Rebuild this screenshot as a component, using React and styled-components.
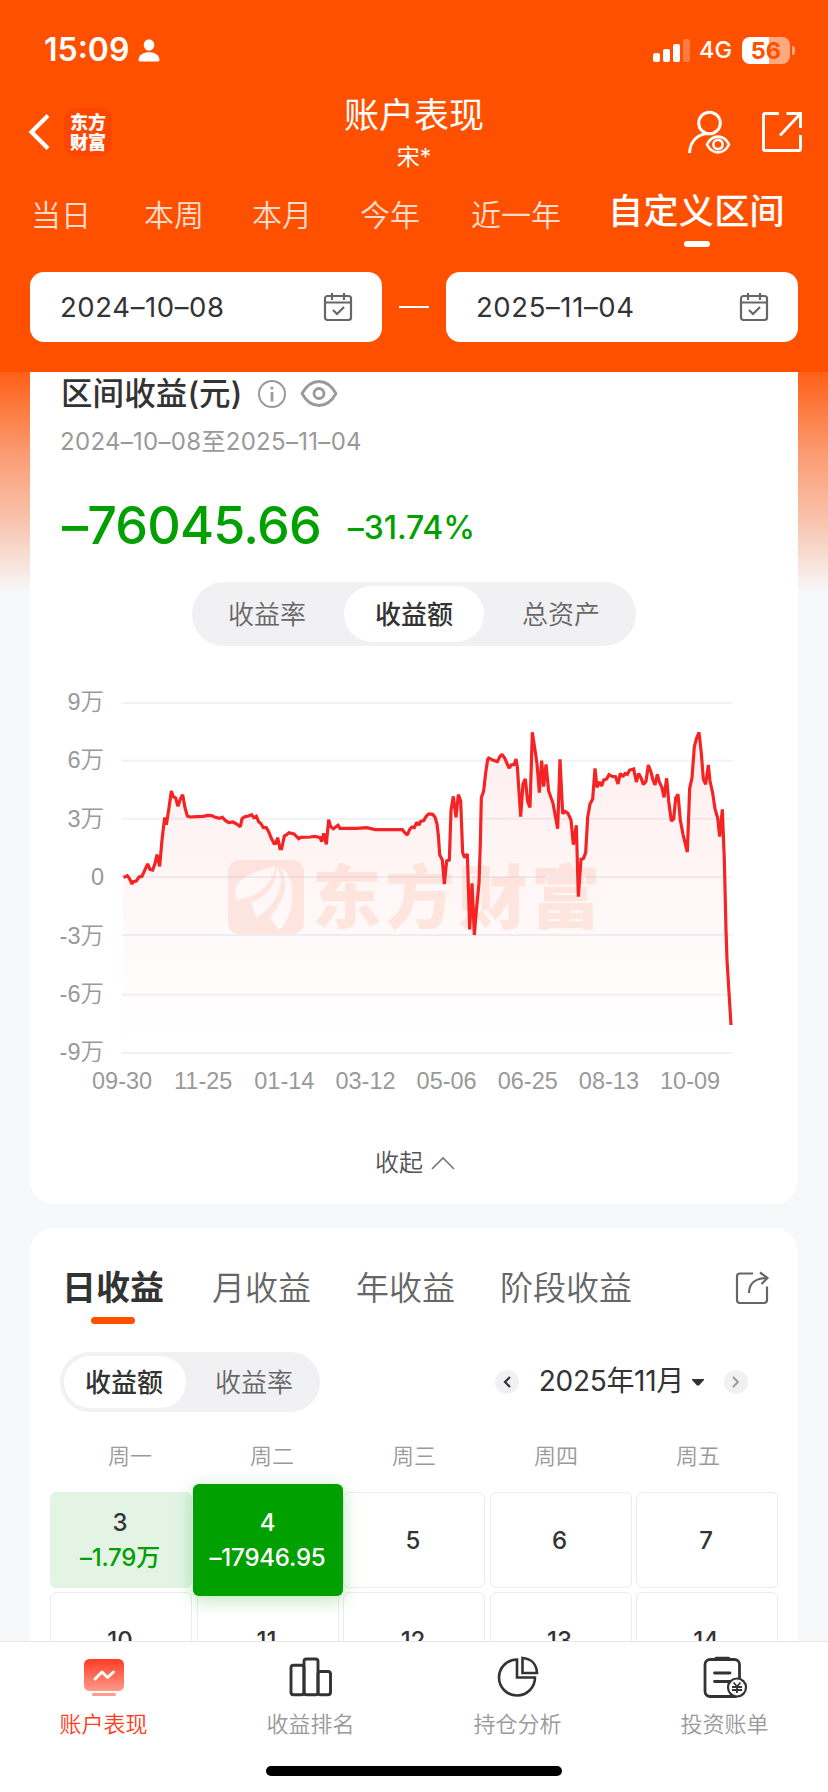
import React from "react";
import styled, { createGlobalStyle, css } from "styled-components";

const GlobalStyle = createGlobalStyle`
  * {
    box-sizing: border-box;
  }
  body {
    margin: 0;
    font-family: Inter, "Noto Sans CJK SC", sans-serif;
    color: #333;
  }
`;

const Page = styled.div`
  width: 828px;
  height: 1792px;
  display: flex;
  flex-direction: column;
  overflow: hidden;
  background: #f7f8fa;
`;

/* ---------- header ---------- */

const Header = styled.header`
  height: 372px;
  flex: none;
  display: flex;
  flex-direction: column;
  background: #ff5000;
  color: #fff;
`;

const StatusBar = styled.div`
  height: 84px;
  padding: 16px 33px 0 44px;
  display: flex;
  align-items: center;
`;

const Clock = styled.span`
  font-size: 32px;
  font-weight: 600;
  line-height: 40px;
  margin-right: 9px;
`;

const Network = styled.span`
  font-size: 23.5px;
  font-weight: 500;
  line-height: 32px;
  margin: 0 10px 0 9px;
`;

const Signal = styled.svg`
  margin-left: auto;
`;

const Battery = styled.div`
  width: 48px;
  height: 27px;
  border-radius: 8px;
  background: linear-gradient(90deg, #fff 56%, #ffa980 56%);
  color: #ff5000;
  font-size: 23.5px;
  font-weight: 700;
  line-height: 28px;
  text-align: center;
`;

const BatteryTip = styled.div`
  width: 3px;
  height: 9px;
  margin-left: 2px;
  border-radius: 0 4px 4px 0;
  background: #ffa980;
`;

const TitleBar = styled.div`
  height: 96px;
  padding: 0 25px;
  display: grid;
  grid-template-columns: 1fr auto 1fr;
  align-items: center;
`;

const TitleLeft = styled.div`
  padding-left: 3px;
  display: flex;
  align-items: center;
  gap: 14px;
`;

const TitleRight = styled.div`
  display: flex;
  align-items: center;
  justify-content: flex-end;
  gap: 30px;
`;

const Brand = styled.div`
  width: 48px;
  height: 48px;
  padding-top: 3px;
  border-radius: 10px;
  background: #ff4600;
  font-family: "Noto Sans CJK SC", sans-serif;
  font-size: 18px;
  font-weight: 900;
  line-height: 20px;
  text-align: center;
  span {
    display: block;
  }
`;

const TitleText = styled.div`
  padding-top: 3px;
  text-align: center;
  h1 {
    margin: 0;
    font-size: 35px;
    font-weight: 400;
    line-height: 44px;
  }
  p {
    margin: 3px 0 0 0;
    font-size: 23px;
    line-height: 34px;
  }
`;

const RangeTabs = styled.nav`
  height: 92px;
  padding: 5px 0 0 31px;
  display: flex;
`;

const RangeTab = styled.span`
  margin-right: ${(p) => p.$after || 48}px;
  font-size: 30px;
  font-weight: 350;
  line-height: 60px;
  color: #ffdccc;
  ${(p) =>
    p.$active &&
    css`
      display: flex;
      flex-direction: column;
      align-items: center;
      margin: 0 0 0 -1px;
      font-size: 35px;
      font-weight: 500;
      letter-spacing: 0.4px;
      line-height: 52px;
      color: #fff;
      &::after {
        content: "";
        width: 26px;
        height: 6px;
        margin-top: 4px;
        border-radius: 3px;
        background: #fff;
      }
    `}
`;

const DateRow = styled.div`
  padding: 0 30px;
  display: flex;
  align-items: center;
  justify-content: space-between;
`;

const DateBox = styled.div`
  width: 352px;
  height: 70px;
  padding: 0 29px 0 30px;
  border-radius: 14px;
  background: #fff;
  color: #333;
  display: flex;
  align-items: center;
  justify-content: space-between;
  font-size: 27.5px;
  font-weight: 380;
  letter-spacing: 0.6px;
`;

const DateDash = styled.i`
  width: 30px;
  height: 2px;
  background: #fff;
`;

/* ---------- content ---------- */

const Content = styled.main`
  flex: 1;
  min-height: 0;
  overflow: hidden;
  padding: 0 30px;
  display: flex;
  flex-direction: column;
  gap: 24px;
  background: linear-gradient(180deg, #ff5f17 0, #fb9a70 80px, #f8c4ae 150px, #f7f8fa 220px);
`;

const Card = styled.section`
  flex: none;
  background: #fff;
  border-radius: ${(p) => (p.$cut ? "0 0 24px 24px" : "24px")};
  height: ${(p) => p.$height}px;
  display: flex;
  flex-direction: column;
`;

const SummaryHead = styled.div`
  height: 43px;
  flex: none;
  padding-left: 31px;
  display: flex;
  align-items: center;
  h2 {
    margin: 0 15px 0 0;
    font-size: 31.5px;
    font-weight: 500;
    letter-spacing: 0.1px;
    line-height: 43px;
  }
  svg {
    margin: 1px 13px 0 0;
  }
`;

const Period = styled.div`
  height: 52px;
  flex: none;
  padding-left: 30px;
  font-size: 24px;
  font-weight: 370;
  line-height: 54px;
  letter-spacing: 0.3px;
  color: #999;
`;

const Amounts = styled.div`
  height: 115px;
  flex: none;
  padding: 27px 0 0 32px;
  display: flex;
  align-items: flex-start;
  gap: 27px;
  color: #00a000;
  font-weight: 500;
`;

const Profit = styled.span`
  font-size: 52px;
  line-height: 64px;
  letter-spacing: -0.8px;
`;

const Percent = styled.span`
  padding-top: 2px;
  font-size: 32px;
  line-height: 64px;
  letter-spacing: -0.1px;
`;

const Segment = styled.div`
  width: ${(p) => p.$width}px;
  height: ${(p) => p.$height}px;
  padding: 4px;
  border-radius: 32px;
  background: #f1f1f4;
  display: flex;
`;

const SegmentItem = styled.span`
  flex: none;
  width: ${(p) => p.$width}px;
  padding: ${(p) => p.$pad || "0 0 3px"};
  border-radius: 28px;
  display: flex;
  align-items: center;
  justify-content: center;
  font-size: 26px;
  font-weight: ${(p) => (p.$active ? 500 : 350)};
  color: ${(p) => (p.$active ? "#333" : "#666")};
  background: ${(p) => (p.$active ? "#fff" : "none")};
`;

const SegmentHolder = styled.div`
  flex: none;
  display: flex;
  justify-content: center;
`;

const ChartRow = styled.div`
  margin-top: 34px;
  height: 380px;
  flex: none;
  display: flex;
`;

const AxisY = styled.div`
  width: 80px;
  flex: none;
  padding: 6px 6px 0 0;
  display: flex;
  flex-direction: column;
  text-align: right;
  color: #999;
  font-family: "Liberation Sans", "Noto Sans CJK SC", sans-serif;
  font-size: 23.5px;
  font-weight: 350;
  line-height: 32px;
  span {
    flex: none;
    height: 58.4px;
  }
`;

const AxisX = styled.div`
  height: 36px;
  flex: none;
  margin-top: 3px;
  padding-left: 51.5px;
  display: flex;
  color: #999;
  font-family: "Liberation Sans", sans-serif;
  font-size: 23.5px;
  line-height: 36px;
  span {
    width: 81.15px;
    text-align: center;
  }
`;

const Collapse = styled.div`
  margin-top: 47px;
  padding-left: 2px;
  display: flex;
  align-items: center;
  justify-content: center;
  gap: 8px;
  color: #555;
  font-size: 24px;
  font-weight: 350;
  line-height: 34px;
`;

/* ---------- calendar ---------- */

const ProfitTabs = styled.div`
  height: 124px;
  flex: none;
  padding: 36px 29px 0 32px;
  display: flex;
`;

const ProfitTab = styled.span`
  margin-right: 45px;
  font-size: 33px;
  font-weight: 350;
  line-height: 48px;
  color: #666;
  ${(p) =>
    p.$active &&
    css`
      display: flex;
      flex-direction: column;
      align-items: center;
      margin-right: 48px;
      font-size: 34px;
      font-weight: 700;
      color: #333;
      &::after {
        content: "";
        width: 44px;
        height: 7px;
        margin-top: 5px;
        border-radius: 4px;
        background: #ff5000;
      }
    `}
`;

const ShareHolder = styled.span`
  margin: 7px 0 0 auto;
`;

const MonthRow = styled.div`
  height: 60px;
  flex: none;
  padding: 0 50px 0 30px;
  display: flex;
  align-items: center;
  justify-content: space-between;
`;

const MonthPicker = styled.div`
  display: flex;
  align-items: center;
  span {
    margin: -2px 8px 0 20px;
    font-size: 28px;
    font-weight: 390;
    line-height: 40px;
    letter-spacing: -0.3px;
  }
`;

const RoundButton = styled.i`
  width: 24px;
  height: 24px;
  margin-left: ${(p) => p.$left || 0}px;
  border-radius: 50%;
  background: #f1f1f4;
  display: flex;
  align-items: center;
  justify-content: center;
`;

const WeekRow = styled.div`
  height: 80px;
  flex: none;
  padding: 0 29px;
  display: grid;
  grid-template-columns: repeat(5, 1fr);
  font-size: 22px;
  font-weight: 350;
  line-height: 88px;
  text-align: center;
  color: #999;
`;

const DayGrid = styled.div`
  padding: 0 20px;
  display: grid;
  grid-template-columns: repeat(5, 142px);
  grid-auto-rows: 96px;
  gap: 4px 4.5px;
`;

const Day = styled.div`
  border: 1px solid #ebebeb;
  border-radius: 6px;
  display: flex;
  flex-direction: column;
  align-items: center;
  justify-content: center;
  font-size: 24px;
  font-weight: 500;
  line-height: 35px;
  padding-right: 2px;
  em {
    font-style: normal;
    letter-spacing: -0.2px;
    color: #00a000;
  }
  ${(p) =>
    p.$tone === "light" &&
    css`
      border-color: #e3f4e5;
      background: #e3f4e5;
    `}
  ${(p) =>
    p.$tone === "solid" &&
    css`
      z-index: 1;
      margin: -8px -4px;
      padding-right: 0;
      border: 0;
      background: #00a000;
      color: #fff;
      box-shadow: 0 4px 18px rgba(0, 160, 0, 0.28);
      em {
        color: #fff;
      }
    `}
`;

/* ---------- bottom bar ---------- */

const BottomBar = styled.footer`
  height: 151px;
  flex: none;
  border-top: 1px solid #e8e8e8;
  background: #fff;
  display: flex;
  flex-direction: column;
  align-items: center;
`;

const NavItems = styled.div`
  width: 100%;
  height: 124px;
  display: grid;
  grid-template-columns: repeat(4, 1fr);
`;

const NavItem = styled.div`
  padding-top: 13px;
  display: flex;
  flex-direction: column;
  align-items: center;
  font-size: 22px;
  font-weight: 350;
  line-height: 32px;
  color: ${(p) => (p.$active ? "#ff3b22" : "#999")};
  svg {
    margin-bottom: 9px;
  }
`;

const HomeBar = styled.div`
  width: 296px;
  height: 10px;
  border-radius: 5px;
  background: #000;
`;

/* ---------- icons ---------- */

const CalendarIcon = () => (
  <svg width="30" height="30" viewBox="0 0 30 30" fill="none" stroke="#666" strokeWidth="2.2">
    <rect x="2" y="4" width="26" height="24" rx="2.5" />
    <path d="M2 10.5h26M9 1v7M21 1v7" />
    <path d="M10 18l4 4 7-7" />
  </svg>
);

const UserEyeIcon = () => (
  <svg width="44" height="44" viewBox="0 0 44 44" fill="none" stroke="#fff" strokeWidth="3">
    <circle cx="22.5" cy="13" r="10.8" />
    <path d="M2.5 43C3 31 11 23.5 22 23.5" />
    <path d="M20 34.5C25 24 37 24 42 34.5C37 45 25 45 20 34.5Z" fill="#ff5000" strokeWidth="2.6" />
    <circle cx="31" cy="34.5" r="4.6" strokeWidth="2.6" />
  </svg>
);

const OpenIcon = () => (
  <svg width="42" height="42" viewBox="0 0 42 42" fill="none" stroke="#fff" strokeWidth="2.9">
    <path d="M18 2.5H4Q2.5 2.5 2.5 4V38Q2.5 39.5 4 39.5H38Q39.5 39.5 39.5 38V24" />
    <path d="M25.5 2.5H39.5V17M39.5 2.5L19 24.5" />
  </svg>
);

const ShareIcon = () => (
  <svg width="34" height="34" viewBox="0 0 34 34" fill="none" stroke="#666" strokeWidth="2.2">
    <path d="M18 2.5H5Q2 2.5 2 5.5V29Q2 32 5 32H29Q32 32 32 29V15.5" />
    <path d="M14 22C14 13 20 7 32 7M25 1.5L32.5 7L26.5 13" />
  </svg>
);

const InfoIcon = () => (
  <svg width="30" height="30" viewBox="0 0 30 30" fill="none" stroke="#999" strokeWidth="2">
    <circle cx="15" cy="15" r="13" />
    <path d="M15 13v9.5" strokeWidth="2.8" />
    <circle cx="15" cy="9" r="1.6" fill="#999" stroke="none" />
  </svg>
);

const EyeIcon = () => (
  <svg width="38" height="30" viewBox="0 0 38 30" fill="none" stroke="#999" strokeWidth="2.8">
    <path d="M2 14.5C11-1.5 27-1.5 36 14.5C27 30.5 11 30.5 2 14.5Z" strokeLinejoin="round" />
    <circle cx="19" cy="14.5" r="5" />
  </svg>
);

const PerformanceIcon = () => (
  <svg width="44" height="44" viewBox="0 0 44 44">
    <defs>
      <linearGradient id="perf" x1="0" y1="0" x2="0" y2="1">
        <stop offset="0" stopColor="#ff3b22" />
        <stop offset="1" stopColor="#ff9a8c" />
      </linearGradient>
    </defs>
    <rect x="2" y="4" width="40" height="32" rx="5.5" fill="url(#perf)" />
    <rect x="10" y="38" width="24" height="3" rx="1.5" fill="#ff9a8c" />
    <path d="M13 24l7-7 5.5 5.5L31.5 17" fill="none" stroke="#fff" strokeWidth="3" strokeLinecap="round" strokeLinejoin="round" />
  </svg>
);

const RankIcon = () => (
  <svg width="44" height="44" viewBox="0 0 44 44" fill="none" stroke="#333" strokeWidth="2.9">
    <rect x="2" y="10.3" width="13" height="29.5" rx="2.5" />
    <rect x="15" y="4" width="14" height="35.8" rx="2.5" />
    <rect x="29" y="16.5" width="12.5" height="23.3" rx="2.5" />
  </svg>
);

const PieIcon = () => (
  <svg width="44" height="44" viewBox="0 0 44 44" fill="none" stroke="#333" strokeWidth="2.6">
    <path d="M21 4.5A18 18 0 1 0 39 22.5H21Z" />
    <path d="M26.5 3V18H41C40.5 9 35 3.5 26.5 3Z" />
  </svg>
);

const BillIcon = () => (
  <svg width="46" height="44" viewBox="0 0 46 44" fill="none" stroke="#333" strokeWidth="2.8">
    <rect x="3" y="4.5" width="34.5" height="37" rx="5" />
    <path d="M14 3.5H26.5" strokeWidth="3.5" strokeLinecap="round" />
    <path d="M12.5 18H28M12.5 26.5H28" strokeLinecap="round" />
    <circle cx="35" cy="32.5" r="9" fill="#fff" strokeWidth="2.2" />
    <path d="M31.5 27.5L35 31.5L38.5 27.5M35 31.5V38M30 32H40M30 35H40" strokeWidth="1.8" />
  </svg>
);

/* ---------- chart ---------- */

const gridY = [69, 242, 416, 591, 765, 944, 1119];

const line = [
  "40,592 46,590 52,587 58,595 66,612 70,605 79,603 87,591 96,589 104,571 113,552 120,568 128,570 135,551 141,524 149,559",
  "156,480 164,412 169,434 176,390 184,333 190,350 197,354 204,379 211,357 218,344 225,383 232,408 240,411 262,410 280,409",
  "293,406 305,407 316,412 328,415 337,412 347,422 356,428 369,426 380,432 391,440 396,416 404,410 416,408 425,404 432,413",
  "439,409 446,425 453,431 460,443 469,443 476,455 484,475 492,490 497,490 503,473 510,506 515,506 523,468 530,464 537,458",
  "552,462 566,476 572,472 600,471 615,469 630,473 635,485 641,460 649,493 656,419 662,440 670,446 677,441 684,436 690,445",
  "740,445 770,443 796,449 877,449 885,459 892,465 899,448 906,441 913,443 920,427 927,435 932,424 941,422 950,407 957,402",
  "968,403 975,411 981,432 985,465 989,524 997,540 1003,612 1010,543 1018,540 1023,392 1030,349 1038,412 1045,344 1052,363 1058,518 1064,533",
  "1072,522 1079,748 1086,610 1093,765 1100,680 1107,610 1111,490 1114,353 1121,333 1127,278 1133,239 1136,234 1150,241 1162,245 1169,231 1176,223 1184,234",
  "1197,264 1204,255 1213,253 1218,237 1222,260 1226,320 1232,410 1239,312 1246,297 1253,365 1260,382 1267,157 1281,250 1288,338 1295,242 1301,320",
  "1308,253 1316,333 1329,370 1335,403 1343,446 1350,238 1358,401 1365,394 1374,400 1383,420 1390,494 1399,436 1405,650 1413,538 1420,536 1427,518",
  "1433,412 1440,372 1448,357 1455,265 1461,322 1468,306 1475,318 1481,300 1490,297 1497,284 1507,289 1517,290 1524,312 1531,280 1538,290 1545,281",
  "1552,283 1559,270 1571,267 1579,306 1586,280 1593,294 1600,313 1608,304 1615,255 1623,277 1629,300 1635,315 1642,283 1648,306 1656,323 1662,352",
  "1670,295 1676,363 1684,423 1691,417 1697,354 1704,343 1711,420 1719,463 1732,516 1739,325 1746,293 1753,200 1760,174 1767,157 1774,220 1780,297",
  "1787,313 1795,255 1800,303 1808,339 1815,387 1823,414 1829,470 1837,388 1843,540 1848,750 1851,840 1863,1035",
].join(" ");

const ProfitChart = () => (
  <svg width="660" height="380" viewBox="0 0 1980 1140">
    <defs>
      <linearGradient id="area" gradientUnits="userSpaceOnUse" x1="0" y1="157" x2="0" y2="1119">
        <stop offset="0" stopColor="#f52323" stopOpacity="0.08" />
        <stop offset="0.6" stopColor="#f52323" stopOpacity="0.03" />
        <stop offset="0.85" stopColor="#f52323" stopOpacity="0.008" />
        <stop offset="1" stopColor="#f52323" stopOpacity="0" />
      </linearGradient>
    </defs>
    {gridY.map((y) => (
      <path key={y} d={`M35 ${y}H1868`} stroke="#f1f1f7" strokeWidth="6" />
    ))}
    <polygon points={`40,1119 ${line} 1863,1119`} fill="url(#area)" />
    <g fill="#f8703b" opacity="0.13">
      <path
        fillRule="evenodd"
        d="M394 540H542Q582 540 582 580V722Q582 762 542 762H394Q354 762 354 722V580Q354 540 394 540Z
           M497 557C450 570 385 590 376 624Q375 645 379 661L420 650C465 630 491 600 497 557Z
           M501 557C500 610 478 645 424 667Q428 695 440 714C488 680 515 640 513 592Z
           M512 560C535 620 530 650 480 711Q490 732 508 750C560 700 560 590 512 560Z"
      />
      <text x="606" y="728" fontFamily="Noto Sans CJK SC, sans-serif" fontSize="208" fontWeight="900" letterSpacing="11">
        东方财富
      </text>
    </g>
    <polyline points={line} fill="none" stroke="#f52323" strokeWidth="9.5" strokeLinejoin="miter" strokeMiterlimit="1.5" />
  </svg>
);

const yLabels = ["9万", "6万", "3万", "0", "-3万", "-6万", "-9万"];
const xLabels = ["09-30", "11-25", "01-14", "03-12", "05-06", "06-25", "08-13", "10-09"];

const days = [
  { day: 3, value: "–1.79万", tone: "light" },
  { day: 4, value: "–17946.95", tone: "solid" },
  { day: 5 },
  { day: 6 },
  { day: 7 },
  { day: 10 },
  { day: 11 },
  { day: 12 },
  { day: 13 },
  { day: 14 },
];

export default function App() {
  return (
    <Page>
      <GlobalStyle />
      <Header>
        <StatusBar>
          <Clock>15:09</Clock>
          <svg width="22" height="23" viewBox="0 0 22 23" fill="#fff">
            <ellipse cx="11" cy="6" rx="5.3" ry="5.8" />
            <path d="M.5 21C.5 10.5 21.5 10.5 21.5 21Q21.5 22.5 20 22.5H2Q.5 22.5 .5 21Z" />
          </svg>
          <Signal width="37" height="23" viewBox="0 0 37 23" fill="#fff">
            <rect x="0" y="14" width="7" height="9" rx="2" />
            <rect x="10" y="10" width="7" height="13" rx="2" />
            <rect x="20" y="5" width="7" height="18" rx="2" />
            <rect x="30" y="0" width="7" height="23" rx="2" opacity="0.25" />
          </Signal>
          <Network>4G</Network>
          <Battery>56</Battery>
          <BatteryTip />
        </StatusBar>
        <TitleBar>
          <TitleLeft>
            <svg width="22" height="36" viewBox="0 0 22 36" fill="none" stroke="#fff" strokeWidth="4.2">
              <path d="M20 1.5L3.5 18L20 34.5" />
            </svg>
            <Brand>
              <span>东方</span>
              <span>财富</span>
            </Brand>
          </TitleLeft>
          <TitleText>
            <h1>账户表现</h1>
            <p>宋*</p>
          </TitleText>
          <TitleRight>
            <UserEyeIcon />
            <OpenIcon />
          </TitleRight>
        </TitleBar>
        <RangeTabs>
          <RangeTab $after={53}>当日</RangeTab>
          <RangeTab>本周</RangeTab>
          <RangeTab>本月</RangeTab>
          <RangeTab $after={51}>今年</RangeTab>
          <RangeTab>近一年</RangeTab>
          <RangeTab $active>自定义区间</RangeTab>
        </RangeTabs>
        <DateRow>
          <DateBox>
            2024–10–08
            <CalendarIcon />
          </DateBox>
          <DateDash />
          <DateBox>
            2025–11–04
            <CalendarIcon />
          </DateBox>
        </DateRow>
      </Header>

      <Content>
        <Card $cut $height={832}>
          <SummaryHead>
            <h2>区间收益(元)</h2>
            <InfoIcon />
            <EyeIcon />
          </SummaryHead>
          <Period>2024–10–08至2025–11–04</Period>
          <Amounts>
            <Profit>–76045.66</Profit>
            <Percent>–31.74%</Percent>
          </Amounts>
          <SegmentHolder>
            <Segment $width={444} $height={64}>
              <SegmentItem $width={148} $pad="0 6px 3px 0">收益率</SegmentItem>
              <SegmentItem $active $width={140}>收益额</SegmentItem>
              <SegmentItem $width={148} $pad="0 0 3px 6px">总资产</SegmentItem>
            </Segment>
          </SegmentHolder>
          <ChartRow>
            <AxisY>
              {yLabels.map((t) => (
                <span key={t}>{t}</span>
              ))}
            </AxisY>
            <ProfitChart />
          </ChartRow>
          <AxisX>
            {xLabels.map((t) => (
              <span key={t}>{t}</span>
            ))}
          </AxisX>
          <Collapse>
            收起
            <svg width="24" height="14" viewBox="0 0 24 14" fill="none" stroke="#777" strokeWidth="1.6">
              <path d="M1 13L12 2L23 13" />
            </svg>
          </Collapse>
        </Card>

        <Card $height={600}>
          <ProfitTabs>
            <ProfitTab $active>日收益</ProfitTab>
            <ProfitTab>月收益</ProfitTab>
            <ProfitTab>年收益</ProfitTab>
            <ProfitTab>阶段收益</ProfitTab>
            <ShareHolder>
              <ShareIcon />
            </ShareHolder>
          </ProfitTabs>
          <MonthRow>
            <Segment $width={260} $height={60}>
              <SegmentItem $active $width={122} $pad="0 2px 3px 0">收益额</SegmentItem>
              <SegmentItem $width={130} $pad="0 0 3px 6px">收益率</SegmentItem>
            </Segment>
            <MonthPicker>
              <RoundButton>
                <svg width="8" height="12" viewBox="0 0 8 12" fill="none" stroke="#333" strokeWidth="2.2">
                  <path d="M7 1L2 6L7 11" />
                </svg>
              </RoundButton>
              <span>2025年11月</span>
              <svg width="12" height="7" viewBox="0 0 12 7" fill="#333">
                <path d="M0 0H12V1L7 6.5H5L0 1Z" />
              </svg>
              <RoundButton $left={20}>
                <svg width="8" height="12" viewBox="0 0 8 12" fill="none" stroke="#999" strokeWidth="1.8">
                  <path d="M1 1L6 6L1 11" />
                </svg>
              </RoundButton>
            </MonthPicker>
          </MonthRow>
          <WeekRow>
            <span>周一</span>
            <span>周二</span>
            <span>周三</span>
            <span>周四</span>
            <span>周五</span>
          </WeekRow>
          <DayGrid>
            {days.map((d) => (
              <Day key={d.day} $tone={d.tone}>
                {d.day}
                {d.value && <em>{d.value}</em>}
              </Day>
            ))}
          </DayGrid>
        </Card>
      </Content>

      <BottomBar>
        <NavItems>
          <NavItem $active>
            <PerformanceIcon />
            账户表现
          </NavItem>
          <NavItem>
            <RankIcon />
            收益排名
          </NavItem>
          <NavItem>
            <PieIcon />
            持仓分析
          </NavItem>
          <NavItem>
            <BillIcon />
            投资账单
          </NavItem>
        </NavItems>
        <HomeBar />
      </BottomBar>
    </Page>
  );
}
